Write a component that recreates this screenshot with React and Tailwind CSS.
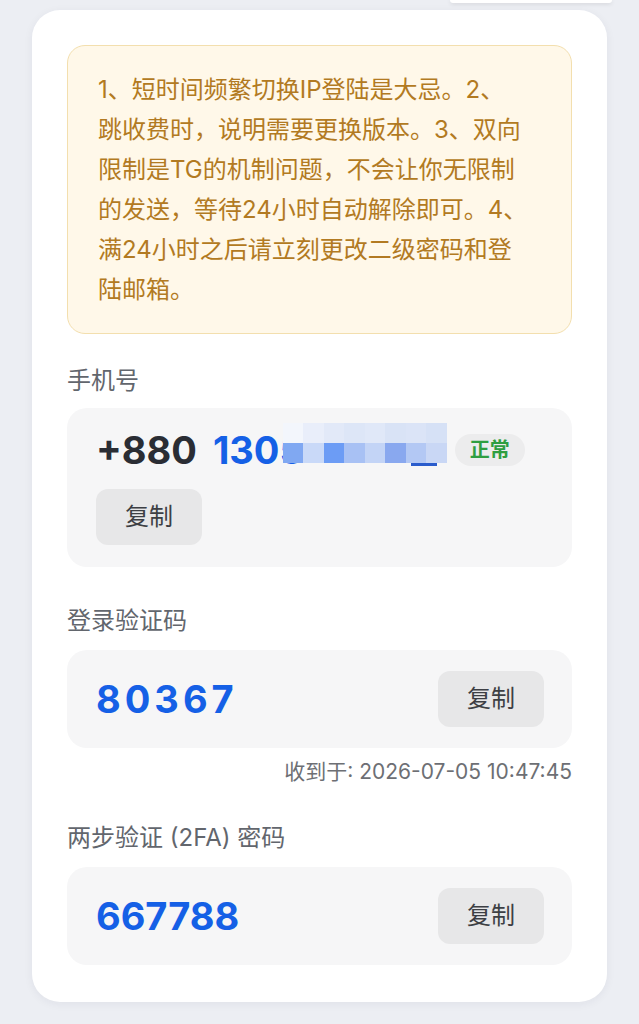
const font = { fontFamily: 'Inter, "Noto Sans CJK SC", sans-serif' };
const numFont = { fontFamily: 'Inter, "Noto Sans", sans-serif' };

const mosaicTop = ['#f3f6fc', '#e9eefa', '#e2e9f8', '#dde6f7', '#e0e8f8', '#d9e3f6', '#dbe4f7', '#d6e1f6'];
const mosaicBottom = ['#80a8f2', '#c9d9f8', '#6c9cf5', '#a8c1f4', '#c3d4f6', '#89a8ef', '#b3c8f4', '#c9d7f5'];

function CopyButton() {
  return (
    <button className="h-[56px] w-[106px] shrink-0 rounded-[12px] bg-[#e7e7e8] text-[24px] text-[#3d3f44]">
      复制
    </button>
  );
}

function Label({ children }) {
  return <div className="text-[24px] leading-[30px] text-[#62666d]">{children}</div>;
}

export default function App() {
  return (
    <div className="min-h-[1024px] w-full bg-[#eceef3]" style={font}>
      <div className="flex justify-end pr-[27px]">
        <div className="h-[3px] w-[162px] rounded-b-[10px] bg-white shadow-[0_1px_4px_rgba(0,0,0,0.12)]" />
      </div>

      <div className="mx-[32px] mt-[7px] rounded-[28px] bg-white px-[35px] pb-[37px] pt-[35px] shadow-[0_2px_10px_rgba(30,40,70,0.06)]">
        <div className="rounded-[18px] border border-[#f3dfae] bg-[#fff8e9] px-[30px] pb-[23px] pt-[24px] text-[24px] leading-[40px] text-[#b27a22]">
          1、短时间频繁切换IP登陆是大忌。2、<br />
          跳收费时，说明需要更换版本。3、双向<br />
          限制是TG的机制问题，不会让你无限制<br />
          的发送，等待24小时自动解除即可。4、<br />
          满24小时之后请立刻更改二级密码和登<br />
          陆邮箱。
        </div>

        <div className="mt-[32px]">
          <Label>手机号</Label>
          <div className="mt-[12px] flex flex-col items-start gap-[19px] rounded-[20px] bg-[#f6f6f7] px-[29px] pb-[22px] pt-[22px]">
            <div className="flex h-[40px] items-center" style={numFont}>
              <span className="text-[38px] font-bold leading-[40px] text-[#2a2d34]">+880</span>
              <span className="ml-[16px] text-[38px] font-bold leading-[40px] text-[#1560e6]">1305</span>
              <span className="relative h-[40px] w-[133px]">
                <span className="absolute bottom-[4px] right-[0px] h-[3px] w-[26px] bg-[#2a5ccc]" />
                <span className="absolute left-[-21px] top-[-7px] flex h-[40px] w-[164px] flex-col">
                  <span className="flex h-[20px]">
                    {mosaicTop.map((c, i) => (
                      <span key={i} className="h-full flex-1" style={{ background: c }} />
                    ))}
                  </span>
                  <span className="flex h-[20px]">
                    {mosaicBottom.map((c, i) => (
                      <span key={i} className="h-full flex-1" style={{ background: c }} />
                    ))}
                  </span>
                </span>
              </span>
              <span
                className="ml-[18px] rounded-full bg-[#ececed] px-[15px] text-[20px] font-bold leading-[32px] text-[#2f9e41]"
                style={font}
              >
                正常
              </span>
            </div>
            <CopyButton />
          </div>
        </div>

        <div className="mt-[39px]">
          <Label>登录验证码</Label>
          <div className="mt-[14px] flex items-center justify-between rounded-[20px] bg-[#f6f6f7] py-[21px] pl-[29px] pr-[28px]">
            <span className="text-[38px] font-bold leading-[40px] tracking-[4px] text-[#1560e6]" style={numFont}>
              80367
            </span>
            <CopyButton />
          </div>
          <div className="mt-[10px] text-right text-[21px] leading-[28px] text-[#6d6f74]">
            收到于: 2026-07-05 10:47:45
          </div>
        </div>

        <div className="mt-[37px]">
          <Label>两步验证 (2FA) 密码</Label>
          <div className="mt-[14px] flex items-center justify-between rounded-[20px] bg-[#f6f6f7] py-[21px] pl-[29px] pr-[28px]">
            <span className="text-[38px] font-bold leading-[40px] text-[#1560e6]" style={numFont}>
              667788
            </span>
            <CopyButton />
          </div>
        </div>
      </div>
    </div>
  );
}
